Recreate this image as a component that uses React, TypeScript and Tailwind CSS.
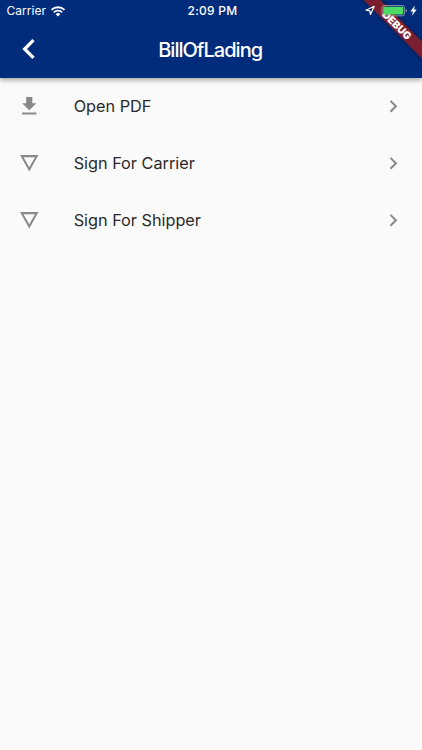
import React from "react";

function StatusBar() {
  return (
    <div className="relative z-20 flex h-5 w-full items-start text-white">
      <div className="flex w-[141px] items-center pl-[6.5px]">
        <span className="h-[22px] w-[43.5px] text-[12px] leading-[22px] tracking-[0.03px] whitespace-nowrap">Carrier</span>
        <svg className="h-[11px] w-[16px]" viewBox="0 0 16 11" fill="none" stroke="white">
          <path d="M1.5 3.9a9.3 9.3 0 0 1 13 0" strokeWidth="1.8" />
          <path d="M3.8 6.4a6 6 0 0 1 8.4 0" strokeWidth="1.7" />
          <path d="M8 10.5 5.7 8.2a3.25 3.25 0 0 1 4.6 0z" fill="white" stroke="none" />
        </svg>
      </div>
      <div className="w-[143px] text-center text-[12px] leading-[22px] font-medium tracking-[0.25px] whitespace-nowrap">2:09 PM</div>
      <div className="flex flex-1 justify-end pr-[4px]">
        <svg className="h-5 w-[56px]" viewBox="362 0 56 20" fill="none">
          <path d="M374.2 6.3 370.5 14.5 369.8 10.8 366 10.2z" stroke="white" strokeWidth="1.2" strokeLinejoin="round" />
          <rect x="382" y="5.5" width="22.5" height="10.3" rx="2" stroke="#c2c4c8" strokeOpacity=".65" />
          <rect x="383.2" y="6.7" width="20.1" height="7.9" rx="1" fill="#4cd964" />
          <path d="M405.8 9v3.4c1.3-.5 1.3-2.9 0-3.4z" fill="#b7bfd0" />
          <path d="M414.8 5.5 410.4 11.4H413L411.9 15.7 416.7 9.6H414z" fill="white" />
        </svg>
      </div>
    </div>
  );
}

function DebugBanner() {
  return (
    <div className="pointer-events-none absolute top-0 right-0 z-10 h-[77px] w-[77px] overflow-hidden">
      <div className="absolute top-[18.7px] left-[7.2px] flex h-[12.3px] w-[90px] rotate-45 items-center justify-center bg-[#7a1e30] text-[10.3px] leading-none font-black text-white shadow-[0_0_6px_rgba(0,0,0,0.4)]">
        DEBUG
      </div>
    </div>
  );
}

const icons = {
  download: "M19 9h-4V3H9v6H5l7 7 7-7zM5 18v2h14v-2H5z",
  details: "M3 4l9 16 9-16H3zm3.38 2h11.25L12 16 6.38 6z",
  chevronRight: "M10 6 8.59 7.41 13.17 12l-4.58 4.59L10 18l6-6z",
  chevronLeft: "M15.41 7.41 14 6l-6 6 6 6 1.41-1.41L10.83 12z",
};

function Icon({ path, className }: { path: string; className: string }) {
  return (
    <svg viewBox="0 0 24 24" fill="currentColor" className={className}>
      <path d={path} />
    </svg>
  );
}

function ListItem({ icon, label }: { icon: string; label: string }) {
  return (
    <li className="flex h-[57px] items-center px-[16.5px] text-[#898989]">
      <Icon path={icon} className="h-[24.5px] w-[24.5px]" />
      <span className="ml-[32.7px] flex-1 text-[16.3px] leading-6 tracking-[-0.02px] text-[#2a2a2a]">{label}</span>
      <Icon path={icons.chevronRight} className="h-[24.5px] w-[24.5px]" />
    </li>
  );
}

export default function App() {
  return (
    <div className="relative h-[750px] w-[422px] overflow-hidden bg-[#fafafa] font-['Inter',sans-serif]">
      <header className="relative h-[77.5px] bg-[#002c7b] shadow-[0_2px_5px_rgba(0,0,0,0.35)]">
        <StatusBar />
        <DebugBanner />
        <div className="flex h-[57.5px] items-center">
          <button aria-label="Back" className="ml-[9.4px] flex h-10 w-10 items-center text-white">
            <Icon path={icons.chevronLeft} className="h-10 w-10" />
          </button>
          <h1 className="w-[321.5px] pt-[2px] text-center text-[20px] leading-6 font-medium tracking-[-0.98px] text-white">BillOfLading</h1>
        </div>
      </header>
      <ul>
        <ListItem icon={icons.download} label="Open PDF" />
        <ListItem icon={icons.details} label="Sign For Carrier" />
        <ListItem icon={icons.details} label="Sign For Shipper" />
      </ul>
    </div>
  );
}
